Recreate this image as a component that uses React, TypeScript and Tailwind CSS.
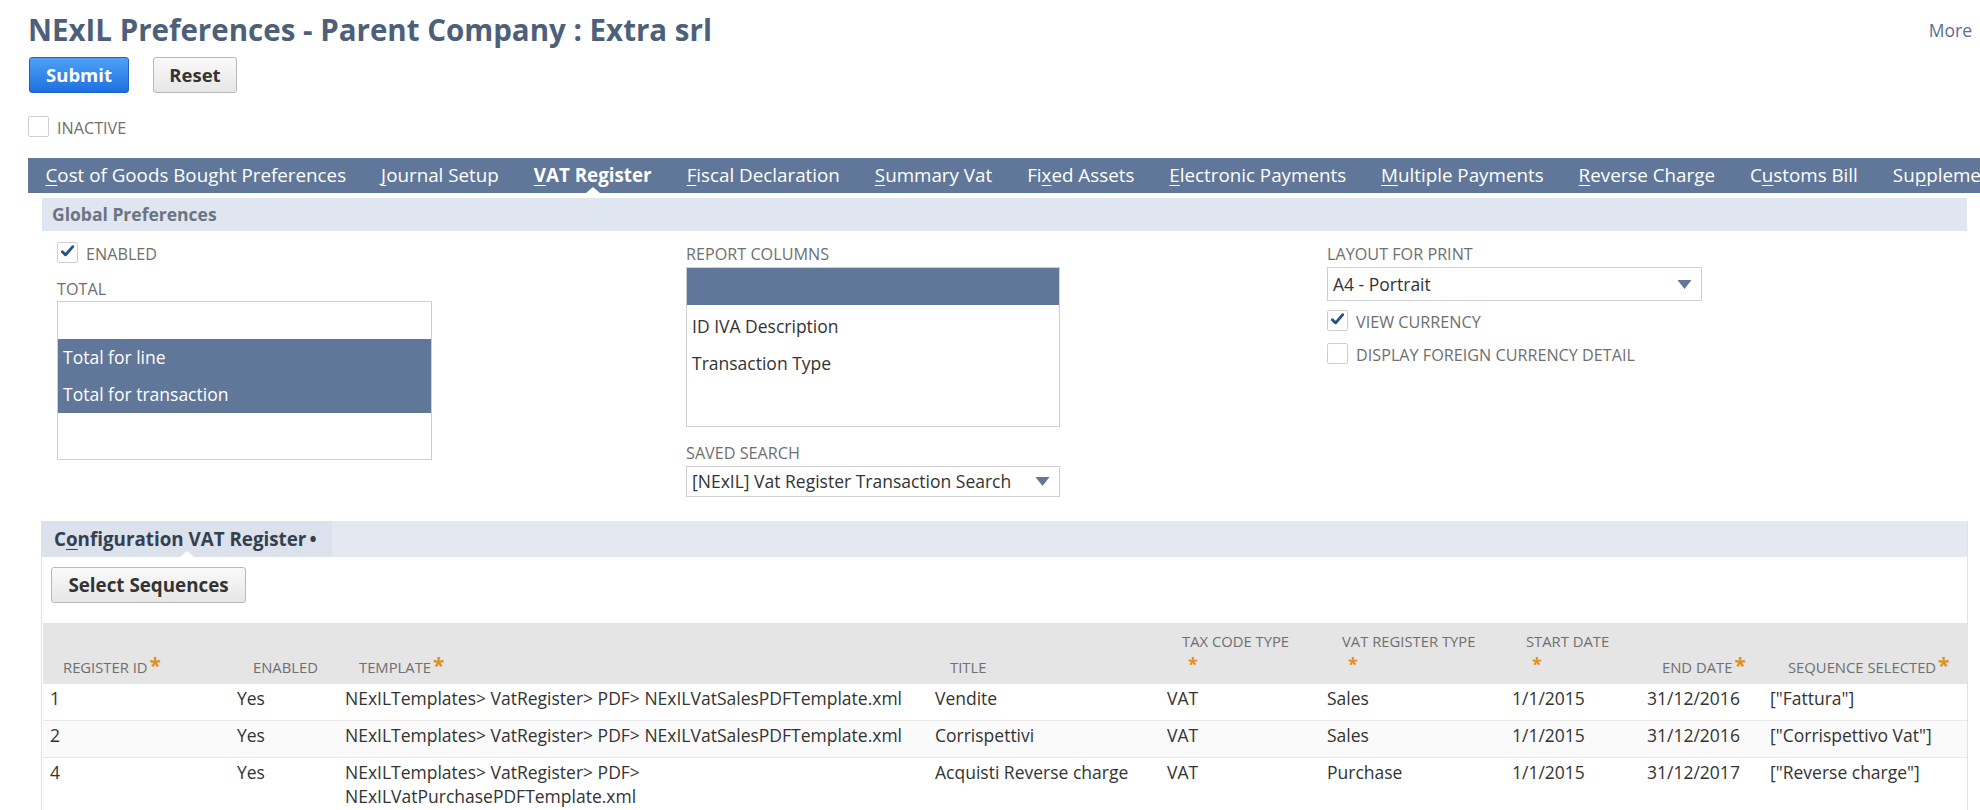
import React from "react";

type Tab = { pre: string; key: string; post: string; active?: boolean };

const tabs: Tab[] = [
  { pre: "", key: "C", post: "ost of Goods Bought Preferences" },
  { pre: "", key: "J", post: "ournal Setup" },
  { pre: "", key: "V", post: "AT Register", active: true },
  { pre: "", key: "F", post: "iscal Declaration" },
  { pre: "", key: "S", post: "ummary Vat" },
  { pre: "Fi", key: "x", post: "ed Assets" },
  { pre: "", key: "E", post: "lectronic Payments" },
  { pre: "", key: "M", post: "ultiple Payments" },
  { pre: "", key: "R", post: "everse Charge" },
  { pre: "C", key: "u", post: "stoms Bill" },
  { pre: "Su", key: "p", post: "plementary" },
];

type Col = { label: string; star?: "inline" | "below"; pl: string };

const cols: Col[] = [
  { label: "Register ID", star: "inline", pl: "pl-[20px]" },
  { label: "Enabled", pl: "pl-[23px]" },
  { label: "Template", star: "inline", pl: "pl-[21px]" },
  { label: "Title", pl: "pl-[22px]" },
  { label: "Tax Code Type", star: "below", pl: "pl-[22px]" },
  { label: "VAT Register Type", star: "below", pl: "pl-[22px]" },
  { label: "Start Date", star: "below", pl: "pl-[21px]" },
  { label: "End Date", star: "inline", pl: "pl-[22px]" },
  { label: "Sequence Selected", star: "inline", pl: "pl-[25px]" },
];

const rows = [
  ["1", "Yes", "NExILTemplates> VatRegister> PDF> NExILVatSalesPDFTemplate.xml", "Vendite", "VAT", "Sales", "1/1/2015", "31/12/2016", '["Fattura"]'],
  ["2", "Yes", "NExILTemplates> VatRegister> PDF> NExILVatSalesPDFTemplate.xml", "Corrispettivi", "VAT", "Sales", "1/1/2015", "31/12/2016", '["Corrispettivo Vat"]'],
  ["4", "Yes", "NExILTemplates> VatRegister> PDF> NExILVatPurchasePDFTemplate.xml", "Acquisti Reverse charge", "VAT", "Purchase", "1/1/2015", "31/12/2017", '["Reverse charge"]'],
];

const Checkbox = ({ checked }: { checked?: boolean }) => (
  <span className="flex h-[21px] w-[21px] shrink-0 items-start justify-start rounded-[2px] border border-[#cfcfcf] bg-white">
    {checked && (
      <svg viewBox="0 0 16 16" className="ml-[2px] mt-[1px] h-[15px] w-[15px]">
        <path d="M2.5 8.2 6 11.6 13.6 2.8" stroke="#24508a" strokeWidth="3" fill="none" strokeLinecap="round" strokeLinejoin="round" />
      </svg>
    )}
  </span>
);

const Caret = () => (
  <svg viewBox="0 0 14 9" className="h-[9px] w-[15px]">
    <path d="M0 0h14L7 9z" fill="#607799" />
  </svg>
);

const Star = () => <span className="ml-[2px] text-[21px] font-bold leading-none text-[#e0901e]">*</span>;

const Notch = () => (
  <span className="absolute bottom-0 left-1/2 h-0 w-0 -translate-x-1/2 border-x-[7px] border-b-[6px] border-x-transparent border-b-white" />
);

const label = "text-[16.2px] uppercase leading-[18px] text-[#6f6f6f]";
const grid = "grid grid-cols-[187px_108px_590px_232px_160px_185px_135px_123px_1fr]";

const App = () => {
  return (
    <div className="h-[810px] w-[1980px] overflow-hidden bg-white font-['Open_Sans','Liberation_Sans',sans-serif] text-[#333]">
      {/* title */}
      <div className="flex items-center justify-between pl-[28px] pr-[8px] pt-[14px]">
        <h1 className="text-[29.5px] font-bold leading-[32px] text-[#4d5f79]">NExIL Preferences - Parent Company : Extra srl</h1>
        <span className="text-[17.5px] text-[#5b6f93]">More</span>
      </div>

      {/* buttons */}
      <div className="ml-[29px] mt-[11px] flex gap-[24px]">
        <button className="h-[36px] w-[100px] rounded-[3px] border border-[#1f63c6] bg-gradient-to-b from-[#4ea1f6] to-[#1d6fe0] text-[18.5px] font-bold text-white">
          Submit
        </button>
        <button className="h-[36px] w-[84px] rounded-[3px] border border-[#b9b9b9] bg-gradient-to-b from-[#fafafa] to-[#e6e6e6] text-[18.5px] font-bold text-[#333]">
          Reset
        </button>
      </div>

      {/* inactive */}
      <div className="ml-[28px] mt-[23px] flex items-end gap-[8px]">
        <Checkbox />
        <span className={label}>Inactive</span>
      </div>

      {/* tabs */}
      <div className="ml-[28px] mt-[21px] flex h-[35px] items-center whitespace-nowrap bg-[#607799] text-[18.8px] text-white">
        {tabs.map((t) => (
          <div key={t.post} className={`relative flex h-full items-center px-[17.5px] ${t.active ? "font-bold" : ""}`}>
            <span>
              {t.pre}
              <span className="underline underline-offset-[3px]">{t.key}</span>
              {t.post}
            </span>
            {t.active && <Notch />}
          </div>
        ))}
      </div>

      <div className="ml-[42px] w-[1925px]">
        {/* global preferences */}
        <div className="mt-[5px] flex h-[33px] items-center bg-[#e0e6ef] pl-[10px] text-[17.5px] font-bold text-[#6b7482]">
          Global Preferences
        </div>

        <div className="flex items-start pl-[15px] pt-[11px]">
          {/* column 1 */}
          <div className="w-[629px]">
            <div className="flex items-end gap-[8px]">
              <Checkbox checked />
              <span className={label}>Enabled</span>
            </div>
            <div className={`mt-[17px] ${label}`}>Total</div>
            <div className="mt-[3px] h-[159px] w-[375px] border border-[#cfcfcf] text-[17.5px]">
              <div className="h-[37px]" />
              <div className="flex h-[37px] items-center bg-[#607799] pl-[5px] text-white">Total for line</div>
              <div className="flex h-[37px] items-center bg-[#607799] pl-[5px] text-white">Total for transaction</div>
            </div>
          </div>

          {/* column 2 */}
          <div className="w-[641px] pt-[3px]">
            <div className={label}>Report Columns</div>
            <div className="mt-[4px] h-[160px] w-[374px] border border-[#cfcfcf] text-[17.5px]">
              <div className="h-[37px] bg-[#607799]" />
              <div className="flex h-[40px] items-center pl-[5px] pt-[3px]">ID IVA Description</div>
              <div className="flex h-[37px] items-center pl-[5px]">Transaction Type</div>
            </div>
            <div className={`mt-[17px] ${label}`}>Saved Search</div>
            <div className="mt-[4px] flex h-[31px] w-[374px] items-center justify-between border border-[#cfcfcf] pl-[5px] pr-[9px] text-[17.5px]">
              <span>[NExIL] Vat Register Transaction Search</span>
              <Caret />
            </div>
          </div>

          {/* column 3 */}
          <div className="pt-[3px]">
            <div className={label}>Layout for Print</div>
            <div className="mt-[4px] flex h-[34px] w-[375px] items-center justify-between border border-[#cfcfcf] pl-[5px] pr-[9px] text-[17.5px]">
              <span>A4 - Portrait</span>
              <Caret />
            </div>
            <div className="mt-[9px] flex items-end gap-[8px]">
              <Checkbox checked />
              <span className={label}>View Currency</span>
            </div>
            <div className="mt-[12px] flex items-end gap-[8px]">
              <Checkbox />
              <span className={label}>Display Foreign Currency Detail</span>
            </div>
          </div>
        </div>

        {/* configuration vat register */}
        <div className="-ml-[1px] mt-[24px] h-[400px] w-[1927px] border-x border-[#e2e2e2]">
          <div className="flex h-[36px] bg-[#e4e9f1]">
            <div className="relative flex w-[290px] items-center bg-[#dce2eb] pl-[12px] text-[18.8px] font-bold text-[#34404f]">
              <span>
                C<span className="underline underline-offset-[3px]">o</span>nfiguration VAT Register
                <span className="ml-[3px]">•</span>
              </span>
              <Notch />
            </div>
          </div>

          <div className="pl-[9px] pt-[10px]">
            <button className="h-[36px] w-[195px] rounded-[3px] border border-[#b9b9b9] bg-gradient-to-b from-[#fafafa] to-[#e6e6e6] text-[18.8px] font-bold text-[#333]">
              Select Sequences
            </button>
          </div>

          <div className="mt-[20px] pl-[1px]">
            <div className={`${grid} h-[61px] bg-[#e5e5e5]`}>
              {cols.map((c) => (
                <div
                  key={c.label}
                  className={`flex flex-col justify-end text-[14.8px] uppercase leading-[20px] text-[#6f6f6f] ${c.pl} ${c.star === "below" ? "pb-[10px]" : "pb-[7px]"}`}
                >
                  <span>
                    {c.label}
                    {c.star === "inline" && <Star />}
                  </span>
                  {c.star === "below" && (
                    <span className="mt-[3px] pl-[6px] text-[18px] font-bold leading-[20px] text-[#e0901e]">*</span>
                  )}
                </div>
              ))}
            </div>

            {rows.map((r, i) => (
              <div
                key={r[0]}
                className={`${grid} border-b border-[#e8e8e8] text-[17.5px] leading-[24px] ${i === 1 ? "bg-[#fafafa]" : "bg-white"}`}
              >
                {r.map((v, j) => (
                  <div key={j} className="pb-[10px] pl-[7px] pr-[20px] pt-[2px]">
                    {v}
                  </div>
                ))}
              </div>
            ))}
          </div>
        </div>
      </div>
    </div>
  );
};

export default App;
